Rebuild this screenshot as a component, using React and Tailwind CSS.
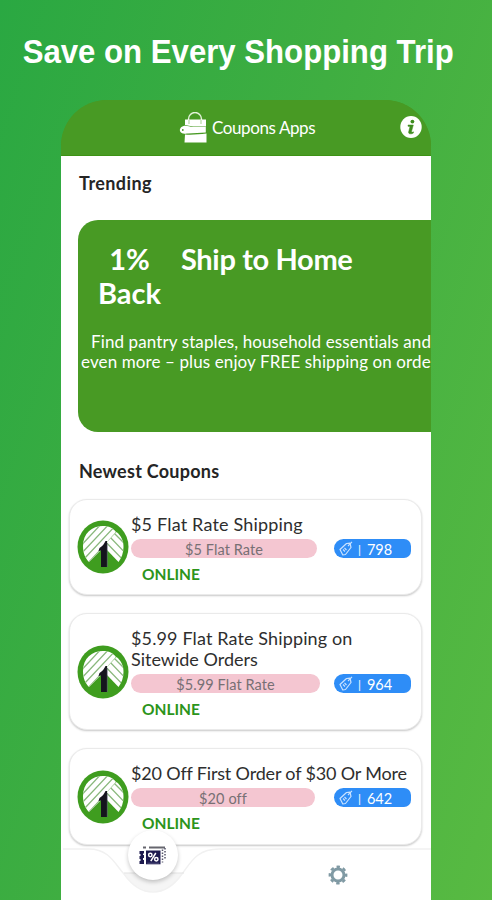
import { Fragment } from 'react'

const coupons = [
  {
    lines: [{ text: '$5 Flat Rate Shipping', spacing: 'tracking-[0.18px]' }],
    deal: '$5 Flat Rate',
    dealWidth: 'w-[186px]',
    uses: 798,
    card: 'h-24',
  },
  {
    lines: [
      { text: '$5.99 Flat Rate Shipping on', spacing: 'tracking-[0.13px]' },
      { text: 'Sitewide Orders', spacing: 'tracking-[0px]' },
    ],
    deal: '$5.99 Flat Rate',
    dealWidth: 'w-[189px]',
    uses: 964,
    card: 'h-[117px]',
  },
  {
    lines: [{ text: '$20 Off First Order of $30 Or More', spacing: 'tracking-[-0.17px]' }],
    deal: '$20 off',
    dealWidth: 'w-[184px]',
    uses: 642,
    card: 'h-[97px]',
  },
]

function BagIcon() {
  return (
    <svg width="28" height="32" viewBox="0 0 28 32" className="shrink-0">
      <path d="M9.5 10V7a6.500 6.500 0 0 1 13 0v3" fill="none" stroke="#e4f3da" strokeWidth="1.400" />
      <path d="M6 7.500h21v7H14L6 13z" fill="#fff" />
      <path d="M4 14.200C7 13 10 14.600 14 15h12.800v5.400L9 21.600c-2 0-5 .4-7-1.200C.2 18.700.4 15.600 4 14.200z" fill="#fff" />
      <path d="M6 22.600c8 .6 14-.4 21.500-1v8.900H5.500z" fill="#fff" />
      <path d="M10 8v4M22 8v4" stroke="#9dcc83" strokeWidth="0.900" />
      <circle cx="3.800" cy="18" r="0.900" fill="#489a24" />
    </svg>
  )
}

function InfoIcon() {
  return (
    <svg width="22" height="24" viewBox="0 0 22 24" className="shrink-0">
      <ellipse cx="11" cy="11" rx="10.700" ry="11" fill="#fff" />
      <circle cx="12.400" cy="5.600" r="1.900" fill="#3f8c1f" />
      <path
        d="M8 9h5.300l-1.800 6.600c-.2.800.6.900 1.900.2v1.200c-2.200 1.400-5.300 1.100-4.800-1.100l1.400-5.300-2-.3z"
        fill="#3f8c1f"
        stroke="#3f8c1f"
        strokeWidth="0.500"
      />
    </svg>
  )
}

// Round store badge: striped dome with a black numeral-like pillar
function StoreLogo() {
  return (
    <svg width="52" height="54" viewBox="0 0 52 54" className="shrink-0">
      <defs>
        <clipPath id="dome-left">
          <path d="M6 26C6 13 15 6 26 6c6 0 10 2 13 6L29 23 23 31 12 42C8 38 6 33 6 26z" />
        </clipPath>
        <clipPath id="dome-right">
          <path d="M30 22L39.500 12c5 4 7 9 7 15 0 6-2 11-5 15L30 30z" />
        </clipPath>
      </defs>
      <ellipse cx="26" cy="27" rx="25.500" ry="26.500" fill="#3f9d1f" />
      <g clipPath="url(#dome-left)">
        <rect width="52" height="54" fill="#fff" />
        <path
          d="M-1 31L27 1M3 35L35 1M7 39L41 3M12 42L44 8"
          stroke="#8ab87d"
          strokeWidth="1.300"
        />
      </g>
      <g clipPath="url(#dome-right)">
        <rect width="52" height="54" fill="#fff" />
        <path d="M25 18L50 44M31 15L56 41M36 12L58 34" stroke="#8ab87d" strokeWidth="1.300" />
      </g>
      <path d="M22.500 28c3-2 4.700-4 6-7H30v26h-6V30.500l-2.500.5z" fill="#15151d" />
      <path d="M30.300 23v24" stroke="#5b6271" strokeWidth="0.700" />
    </svg>
  )
}

function TagIcon() {
  return (
    <svg width="14" height="15" viewBox="0 0 14 15" className="shrink-0">
      <path
        d="M1 8.500L7.500 2.500l3.500-.3 1 4.300-5.500 7-2.700.5z"
        fill="none"
        stroke="#c9e2ff"
        strokeWidth="1.200"
        strokeLinejoin="round"
      />
      <path d="M9 5L13 .800M4 8.500l2 2M5.500 7l2 2" fill="none" stroke="#c9e2ff" strokeWidth="1.100" />
    </svg>
  )
}

function CouponIcon() {
  return (
    <svg width="28" height="20" viewBox="0 0 28 20">
      <path d="M.5 5H5v2.500H4V9h1v3H4v2h1v4H.5v-3h1v-2h-1v-3h1V8h-1z" fill="#1d1a4f" />
      <path d="M7 4.500h14.500v13.800H7z" fill="#1d1a4f" />
      <path d="M8.300 17.200h11.900" stroke="#7b7aa0" strokeWidth="0.600" />
      <path d="M4 1.500h3M10 1.500h16" fill="none" stroke="#66666e" strokeWidth="1.800" />
      <path d="M23.500 3.500v13M26 2v12" stroke="#55556a" strokeWidth="1.500" strokeDasharray="1.500 1.500" />
      <path d="M16.800 7l-5 8.200" stroke="#fff" strokeWidth="1.500" />
      <circle cx="11.300" cy="9" r="1.700" fill="none" stroke="#fff" strokeWidth="1.500" />
      <circle cx="17.300" cy="13.200" r="1.700" fill="none" stroke="#fff" strokeWidth="1.500" />
    </svg>
  )
}

function GearIcon() {
  return (
    <svg width="20" height="20" viewBox="0 0 20 20">
      <circle cx="10" cy="10" r="8.200" fill="none" stroke="#809aa4" strokeWidth="2.400" strokeDasharray="3.400 3.040" strokeDashoffset="1.700" />
      <circle cx="10" cy="10" r="6" fill="none" stroke="#809aa4" strokeWidth="3" />
    </svg>
  )
}

function CouponCard({ coupon }) {
  return (
    <div
      className={`flex items-center rounded-[18px] border border-[#eaeaea] bg-white pl-[7px] shadow-[0_1px_2px_rgba(0,0,0,0.22)] ${coupon.card}`}
    >
      <StoreLogo />
      <div className="flex h-full flex-col pt-[14px] pl-[2px]">
        <h3 className="text-[18px] leading-[21px] whitespace-nowrap text-[#2e2e2e]">
          {coupon.lines.map((line, i) => (
            <Fragment key={line.text}>
              {i > 0 && <br />}
              <span className={line.spacing}>{line.text}</span>
            </Fragment>
          ))}
        </h3>
        <div className="mt-1 flex w-[280px] justify-between">
          <div
            className={`h-[19px] rounded-full bg-[#f4c6d1] text-center text-[14.500px] leading-[22px] tracking-[0.1px] text-[#777074] ${coupon.dealWidth}`}
          >
            {coupon.deal}
          </div>
          <div className="flex h-[19px] w-[77px] items-center rounded-l-[9.500px] rounded-r-[7px] bg-[#2e8df7] pl-[5px] text-[14.500px] leading-[20px] text-white">
            <TagIcon />
            <span className="mt-0.5 ml-[5px] text-[12px]">|</span>
            <span className="mt-[3px] ml-[6px] tracking-[-0.100px]">{coupon.uses}</span>
          </div>
        </div>
        <div className="mt-[7px] ml-[11px] text-[15.500px] leading-[19px] font-bold text-[#2c941b]">ONLINE</div>
      </div>
    </div>
  )
}

function NavBar() {
  return (
    <nav className="relative h-[52px] bg-white">
      <svg width="370" height="52" viewBox="0 0 370 52" className="block">
        <path d="M2 1H28C53 1 55 17 65 29C82 51 104 49 119 28C128 14 134 1 158 1H370V52H2z" fill="#fff" />
        <path d="M63 25H122C106 50 80 50 63 25z" fill="#f5f5f5" />
        <path
          d="M2 1H28C48 1 54 16 63 26C80 50 104 50 121 26C130 14 136 1 158 1H370"
          fill="none"
          stroke="#f1f1f1"
          strokeWidth="1.500"
        />
        <path d="M63 25H123" stroke="#e3e3e3" />
      </svg>
      <button className="absolute -top-[18px] left-[67px] flex size-[50px] items-center justify-center rounded-full bg-white pt-0.5 shadow-[0_2px_4px_rgba(0,0,0,0.22)]">
        <CouponIcon />
      </button>
      <button className="absolute top-[17px] left-[267px]">
        <GearIcon />
      </button>
    </nav>
  )
}

export default function App() {
  return (
    <div className="flex h-[900px] w-[492px] flex-col overflow-hidden bg-[linear-gradient(108deg,#2aa842_0%,#3fae41_45%,#58ba42_100%)] font-['Lato',sans-serif]">
      <h1 className="h-[100px] origin-left scale-x-[0.944] pt-[33px] pl-[24px] font-['Liberation_Sans',sans-serif] text-[33px] leading-[38px] font-bold whitespace-nowrap text-white">
        Save on Every Shopping Trip
      </h1>

      <main className="ml-[61px] flex h-[800px] w-[370px] flex-col overflow-hidden rounded-t-[46px] bg-[linear-gradient(#489a24_56px,#fff_56px)]">
        <header className="flex h-[56px] shrink-0 items-center border-b border-[#3d9215] bg-[#489a24] pl-[118px] text-white">
          <BagIcon />
          <span className="ml-[5px] w-[160px] text-[17px] tracking-[-0.400px]">Coupons Apps</span>
          <span className="ml-[28px]">
            <InfoIcon />
          </span>
        </header>

        <h2 className="mt-[17px] pl-[18px] text-[18px] leading-[21px] font-bold tracking-[0.400px] text-[#252525]">Trending</h2>

        <section className="mt-[26px] ml-[17px] h-[212px] w-[400px] shrink-0 rounded-[20px] bg-[#489a24] text-white">
          <div className="flex pt-[22px] text-[29px] leading-[34px] font-bold">
            <div className="w-[103px] text-center">1% Back</div>
            <div className="tracking-[-0.350px] whitespace-nowrap">Ship to Home</div>
          </div>
          <p className="mt-[22px] pl-[3px] text-[17px] leading-[20px] tracking-[0.110px] whitespace-nowrap">
            <span className="pl-[10px]">Find pantry staples, household essentials and</span>
            <br />
            even more – plus enjoy FREE shipping on orde
          </p>
        </section>

        <h2 className="mt-[29px] pl-[18px] text-[18px] leading-[21px] font-bold tracking-[0.250px] text-[#252525]">Newest Coupons</h2>

        <div className="mt-[17px] flex w-[369px] flex-col gap-[18px] pr-2 pl-2">
          {coupons.map((coupon) => (
            <CouponCard key={coupon.deal} coupon={coupon} />
          ))}
        </div>

        <div className="mt-auto shrink-0">
          <NavBar />
        </div>
      </main>
    </div>
  )
}
